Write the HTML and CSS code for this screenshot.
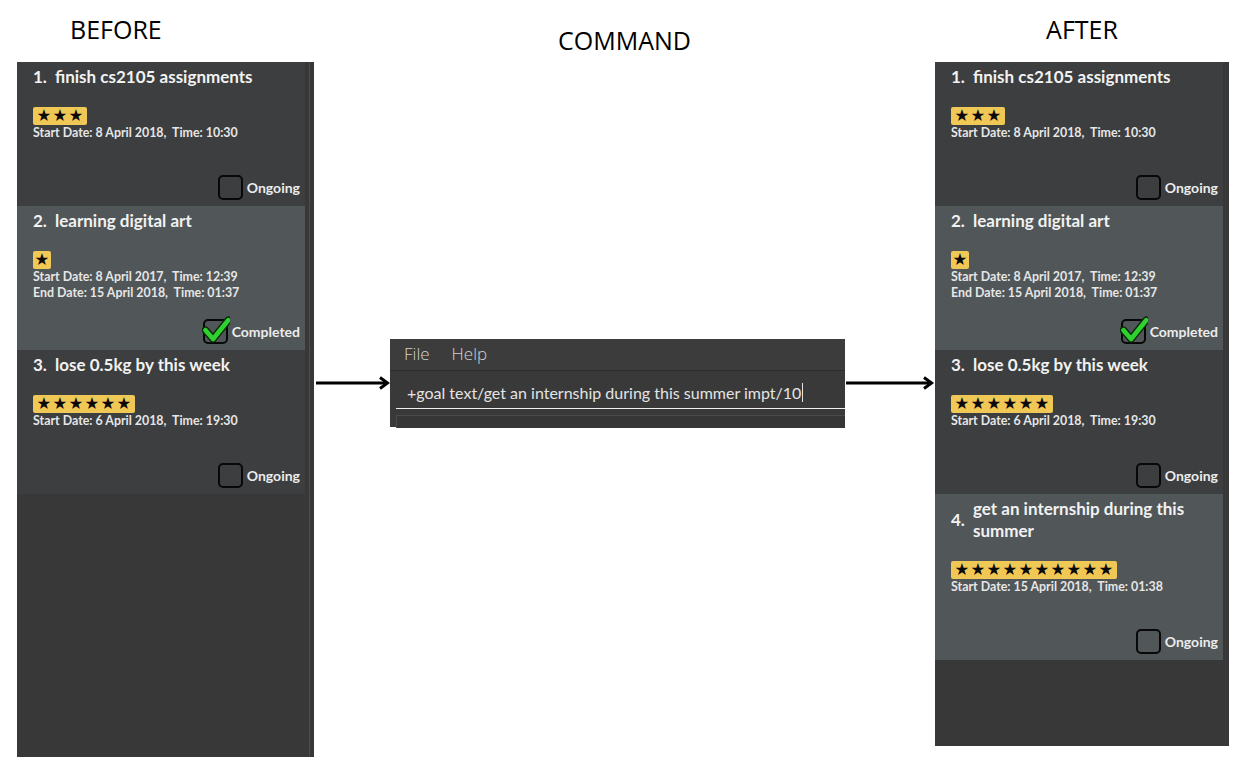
FILE: index.html
```html
<!DOCTYPE html>
<html lang="en">
<head>
<meta charset="utf-8">
<title>Before / Command / After</title>
<link rel="stylesheet" href="styles.css">
</head>
<body>
<div class="stage">
  <section class="col col-before">
    <h2 class="heading heading-before">BEFORE</h2>
    <div class="panel panel-before">
      <div class="list">
        <div class="card card-dark">
          <div class="title"><span class="idx">1.</span><span class="name">finish cs2105 assignments</span></div>
          <div class="badge"><span>★</span><span>★</span><span>★</span></div>
          <div class="dates"><div>Start Date: 8 April 2018,&nbsp; Time: 10:30</div></div>
          <div class="status"><span class="box"></span><span class="label">Ongoing</span></div>
        </div>
        <div class="card card-light">
          <div class="title"><span class="idx">2.</span><span class="name">learning digital art</span></div>
          <div class="badge badge-one"><span>★</span></div>
          <div class="dates"><div>Start Date: 8 April 2017,&nbsp; Time: 12:39</div><div>End Date: 15 April 2018,&nbsp; Time: 01:37</div></div>
          <div class="status"><span class="box"><svg class="tick" viewBox="0 0 24 24" width="28" height="28"><path d="M3 13 L9.5 20.5 L22.5 4.5" fill="none" stroke="#0b2a0b" stroke-width="6.5" stroke-linecap="round" stroke-linejoin="round"/><path d="M3 13 L9.5 20.5 L22.5 4.5" fill="none" stroke="#2fd12f" stroke-width="4" stroke-linecap="round" stroke-linejoin="round"/></svg></span><span class="label">Completed</span></div>
        </div>
        <div class="card card-dark">
          <div class="title"><span class="idx">3.</span><span class="name">lose 0.5kg by this week</span></div>
          <div class="badge"><span>★</span><span>★</span><span>★</span><span>★</span><span>★</span><span>★</span></div>
          <div class="dates"><div>Start Date: 6 April 2018,&nbsp; Time: 19:30</div></div>
          <div class="status"><span class="box"></span><span class="label">Ongoing</span></div>
        </div>
      </div>
      <div class="scrollbar scrollbar-line"></div>
    </div>
  </section>

  <section class="col col-command">
    <h2 class="heading heading-command">COMMAND</h2>
    <div class="flow">
      <div class="arrow arrow-left">
        <svg viewBox="0 0 76 14" width="76" height="14"><path d="M2 7 H73" stroke="#000" stroke-width="3"/><path d="M66 1.5 L73.5 7 L66 12.5" fill="none" stroke="#000" stroke-width="3"/></svg>
      </div>
      <div class="cmd">
        <div class="menubar"><span class="menu">File</span><span class="menu">Help</span></div>
        <div class="input-row"><div class="input">+goal text/get an internship during this summer impt/10<span class="caret"></span></div></div>
        <div class="result"><div class="result-box"></div></div>
      </div>
      <div class="arrow arrow-right">
        <svg viewBox="0 0 90 14" width="90" height="14"><path d="M1 7 H86" stroke="#000" stroke-width="3"/><path d="M79 1.5 L86.5 7 L79 12.5" fill="none" stroke="#000" stroke-width="3"/></svg>
      </div>
    </div>
  </section>

  <section class="col col-after">
    <h2 class="heading heading-after">AFTER</h2>
    <div class="panel panel-after">
      <div class="list">
        <div class="card card-dark">
          <div class="title"><span class="idx">1.</span><span class="name">finish cs2105 assignments</span></div>
          <div class="badge"><span>★</span><span>★</span><span>★</span></div>
          <div class="dates"><div>Start Date: 8 April 2018,&nbsp; Time: 10:30</div></div>
          <div class="status"><span class="box"></span><span class="label">Ongoing</span></div>
        </div>
        <div class="card card-light">
          <div class="title"><span class="idx">2.</span><span class="name">learning digital art</span></div>
          <div class="badge badge-one"><span>★</span></div>
          <div class="dates"><div>Start Date: 8 April 2017,&nbsp; Time: 12:39</div><div>End Date: 15 April 2018,&nbsp; Time: 01:37</div></div>
          <div class="status"><span class="box"><svg class="tick" viewBox="0 0 24 24" width="28" height="28"><path d="M3 13 L9.5 20.5 L22.5 4.5" fill="none" stroke="#0b2a0b" stroke-width="6.5" stroke-linecap="round" stroke-linejoin="round"/><path d="M3 13 L9.5 20.5 L22.5 4.5" fill="none" stroke="#2fd12f" stroke-width="4" stroke-linecap="round" stroke-linejoin="round"/></svg></span><span class="label">Completed</span></div>
        </div>
        <div class="card card-dark">
          <div class="title"><span class="idx">3.</span><span class="name">lose 0.5kg by this week</span></div>
          <div class="badge"><span>★</span><span>★</span><span>★</span><span>★</span><span>★</span><span>★</span></div>
          <div class="dates"><div>Start Date: 6 April 2018,&nbsp; Time: 19:30</div></div>
          <div class="status"><span class="box"></span><span class="label">Ongoing</span></div>
        </div>
        <div class="card card-light">
          <div class="title"><span class="idx">4.</span><span class="name name-wrap">get an internship during this summer</span></div>
          <div class="badge"><span>★</span><span>★</span><span>★</span><span>★</span><span>★</span><span>★</span><span>★</span><span>★</span><span>★</span><span>★</span></div>
          <div class="dates"><div>Start Date: 15 April 2018,&nbsp; Time: 01:38</div></div>
          <div class="status"><span class="box"></span><span class="label">Ongoing</span></div>
        </div>
      </div>
      <div class="scrollbar"></div>
    </div>
  </section>
</div>
</body>
</html>
```

FILE: styles.css
```css
html, body {
  margin: 0;
  padding: 0;
  background: #ffffff;
}

body {
  font-family: "Lato", "Noto Sans", sans-serif;
  width: 1236px;
  height: 757px;
  overflow: hidden;
}

.stage {
  display: flex;
  align-items: flex-start;
  padding-left: 17px;
}

.col {
  display: flex;
  flex-direction: column;
}

.col-before { width: 297px; }
.col-command { width: 621px; }
.col-after { width: 294px; }

.heading {
  margin: 0;
  height: 62px;
  box-sizing: border-box;
  font-family: "Open Sans", "Liberation Sans", sans-serif;
  font-weight: 400;
  font-size: 25px;
  line-height: 30px;
  color: #000;
}

.heading-before { padding: 14px 0 0 53px; }
.heading-command { padding: 25px 0 0 0; text-align: center; }
.heading-after { padding: 14px 0 0 0; text-align: center; }

/* Panels */
.panel {
  display: flex;
  background: #383838;
}

.panel-before { height: 695px; }
.panel-after { height: 684px; }

.list {
  width: 288px;
  display: flex;
  flex-direction: column;
}

.scrollbar {
  flex: 1;
}

.scrollbar-line {
  background: linear-gradient(to right, transparent 4px, #4d4d4d 4px, #4d4d4d 5px, transparent 5px);
}

/* Cards */
.card {
  display: flex;
  flex-direction: column;
  padding: 4px 5px 6px 16px;
  color: #f2f2f2;
}

.card-dark { background: #3c3e3f; }
.card-light { background: #515658; }

.title {
  display: flex;
  align-items: center;
  font-weight: 700;
  font-size: 17px;
  line-height: 22px;
}

.idx {
  width: 22px;
  flex: none;
}

.name-wrap {
  max-width: 236px;
}

.badge {
  align-self: flex-start;
  display: inline-flex;
  align-items: center;
  margin-top: 19px;
  height: 18px;
  padding: 0 3px;
  background: #f0c856;
  border-radius: 2px;
}

.badge span {
  width: 16px;
  height: 18px;
  text-align: center;
  font-family: "DejaVu Sans", sans-serif;
  font-size: 16.5px;
  line-height: 18px;
  color: #0a0a0a;
}

.badge-one { padding: 0 1px; }

.dates {
  height: 32px;
  font-weight: 700;
  font-size: 12.4px;
  line-height: 16px;
  color: #e6e6e6;
}

.status {
  margin-top: 18px;
  display: flex;
  justify-content: flex-end;
  align-items: center;
  gap: 4px;
  height: 25px;
}

.box {
  position: relative;
  width: 25px;
  height: 25px;
  box-sizing: border-box;
  border: 2.5px solid #080808;
  border-radius: 5px;
}

.tick {
  position: absolute;
  left: -3px;
  top: -6px;
}

.label {
  font-weight: 700;
  font-size: 14px;
  color: #ececec;
}

/* Command area */
.flow {
  margin-top: 277px;
  display: flex;
  align-items: flex-start;
}

.arrow {
  margin-top: 37px;
  display: flex;
}

.arrow-left { width: 76px; }
.arrow-right { width: 90px; }

.cmd {
  width: 455px;
  background: #393939;
  display: flex;
  flex-direction: column;
}

.menubar {
  height: 32px;
  box-sizing: border-box;
  background: #3c3c3c;
  border-bottom: 1px solid #2c2c2c;
  display: flex;
  align-items: center;
  gap: 22px;
  padding: 0 0 2px 14px;
  font-family: "Open Sans", "Lato", sans-serif;
  font-weight: 300;
  font-size: 17px;
  color: #d2d2d2;
}

.input-row {
  padding-left: 6px;
}

.input {
  height: 38px;
  box-sizing: border-box;
  border-bottom: 1px solid #f0f0f0;
  padding: 6px 0 0 11px;
  display: flex;
  align-items: center;
  font-family: "Lato", sans-serif;
  font-weight: 400;
  font-size: 16px;
  color: #e4e4e4;
  white-space: nowrap;
}

.caret {
  display: inline-block;
  width: 1px;
  height: 19px;
  background: #e4e4e4;
  margin-left: 1px;
}

.result {
  padding: 6px 0 0 6px;
  height: 18px;
  box-sizing: border-box;
}

.result-box {
  height: 100%;
  border-top: 1px solid #4a4a4a;
  border-left: 1px solid #4a4a4a;
  background: #363636;
}
```
